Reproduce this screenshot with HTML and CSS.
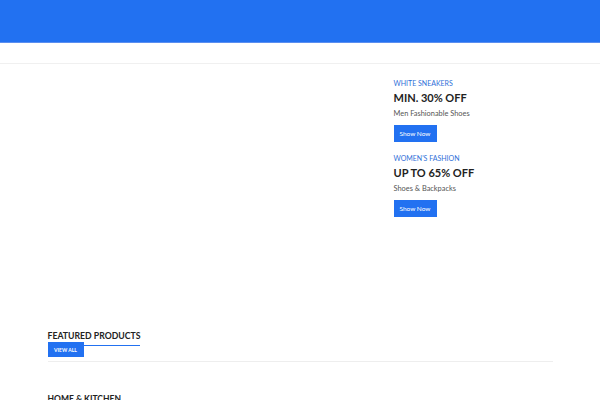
FILE: index.html
```html
<!DOCTYPE html>
<html>
<head>
<meta charset="utf-8">
<link rel="stylesheet" href="styles.css">
</head>
<body>
<header class="topbar"></header>
<nav class="navbar"></nav>
<main class="container">
  <section class="hero">
    <div class="slider"></div>
    <div class="banners">
      <div class="banner">
        <p class="banner-sub">WHITE SNEAKERS</p>
        <h3 class="banner-title">MIN. 30% OFF</h3>
        <p class="banner-text">Men Fashionable Shoes</p>
        <a class="btn">Show Now</a>
      </div>
      <div class="banner">
        <p class="banner-sub">WOMEN'S FASHION</p>
        <h3 class="banner-title">UP TO 65% OFF</h3>
        <p class="banner-text">Shoes &amp; Backpacks</p>
        <a class="btn">Show Now</a>
      </div>
    </div>
  </section>
  <section class="featured">
    <div class="section-head">
      <h2 class="section-title">FEATURED PRODUCTS</h2>
      <a class="btn-small">VIEW ALL</a>
    </div>
  </section>
  <section class="category">
    <h2 class="cat-title">HOME &amp; KITCHEN</h2>
  </section>
</main>
</body>
</html>
```
FILE: styles.css
```css
* { box-sizing: border-box; }
html, body { margin: 0; padding: 0; }
body {
  font-family: Lato, "Liberation Sans", sans-serif;
  color: #222;
  background: #fff;
  width: 600px;
  height: 400px;
  overflow: hidden;
}
.topbar {
  height: 43px;
  background: #2271f1;
  border-bottom: 1px solid #5b8ff0;
}
.navbar {
  height: 21px;
  border-bottom: 1px solid #f0f0f0;
}
.container {
  width: 505px;
  margin: 0 auto;
}
.hero {
  display: flex;
  height: 266px;
}
.slider {
  width: 346px;
}
.banners {
  display: flex;
  flex-direction: column;
  padding-top: 15px;
  gap: 12px;
}
.banner-sub {
  margin: 0;
  font-size: 7px;
  color: #2f6fd8;
  line-height: 9px;
}
.banner-title {
  margin: 3px 0 0;
  font-size: 11px;
  font-weight: 700;
  line-height: 14px;
  color: #222;
}
.banner-text {
  margin: 4px 0 0;
  font-size: 7.4px;
  line-height: 9px;
  color: #555;
}
.btn {
  display: inline-flex;
  align-items: center;
  justify-content: center;
  width: 43px;
  height: 17px;
  margin-top: 7px;
  background: #2271f1;
  color: #fff;
  font-size: 6.5px;
}
.featured {
  border-bottom: 1px solid #eeeeee;
  padding-bottom: 4px;
}
.section-head {
  display: flex;
  flex-direction: column;
  align-items: flex-start;
}
.section-title {
  margin: 0;
  font-size: 8.7px;
  font-weight: 700;
  line-height: 12px;
  color: #222;
  border-bottom: 1px solid #2271f1;
  padding-bottom: 3px;
}
.btn-small {
  display: inline-flex;
  align-items: center;
  justify-content: center;
  width: 36px;
  height: 15px;
  margin-top: -4px;
  background: #2271f1;
  color: #fff;
  font-size: 5px;
  font-weight: 700;
}
.category {
  padding-top: 32px;
}
.cat-title {
  margin: 0;
  font-size: 8.5px;
  font-weight: 700;
  line-height: 10px;
  color: #222;
}
```
